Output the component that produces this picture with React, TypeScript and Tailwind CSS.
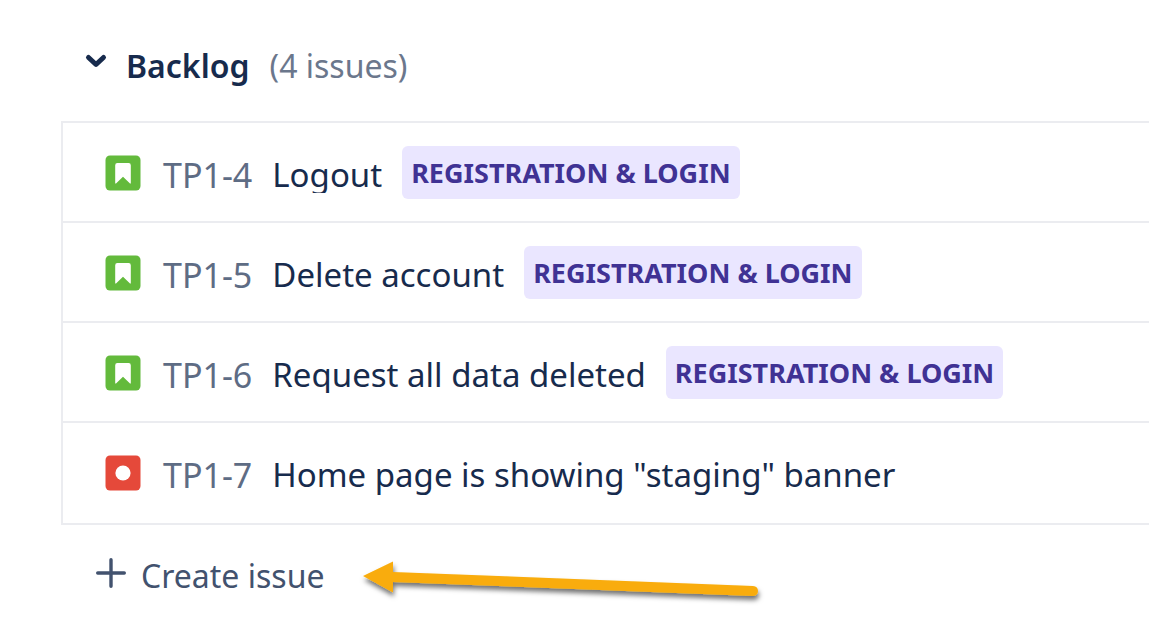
type Issue = { key: string; title: string; epic?: string; type: "story" | "bug" };

const issues: Issue[] = [
  { key: "TP1-4", title: "Logout", epic: "REGISTRATION & LOGIN", type: "story" },
  { key: "TP1-5", title: "Delete account", epic: "REGISTRATION & LOGIN", type: "story" },
  { key: "TP1-6", title: "Request all data deleted", epic: "REGISTRATION & LOGIN", type: "story" },
  { key: "TP1-7", title: 'Home page is showing "staging" banner', type: "bug" },
];

function TypeIcon({ type }: { type: Issue["type"] }) {
  return (
    <svg viewBox="0 0 36 36" className="mt-[2px] size-9 shrink-0" role="img" aria-label={type}>
      <rect x="0.5" y="0.5" width="35" height="35" rx="4.5" fill={type === "story" ? "#63ba3c" : "#e5493a"} />
      {type === "story" ? (
        <path d="M10.2 28.5V10.2Q10.2 8 12.4 8h11.2q2.2 0 2.2 2.2v18.3h-.8L18 21.8l-7 6.7z" fill="#fff" />
      ) : (
        <circle cx="18" cy="18" r="7.6" fill="#fff" />
      )}
    </svg>
  );
}

function Arrow() {
  return (
    <svg
      viewBox="0 0 410 50"
      className="pointer-events-none absolute top-1/2 left-full ml-[34px] h-[50px] w-[410px] -translate-y-1/2 overflow-visible"
      aria-hidden="true"
    >
      <defs>
        <filter id="arrow-shadow" x="-5%" y="-30%" width="110%" height="200%">
          <feDropShadow dx="1" dy="4" stdDeviation="2.5" floodColor="#000" floodOpacity="0.55" />
        </filter>
      </defs>
      <path
        d="M5 25L35 10.5v10.5L395 35q5 0.5 5 5t-5 5L35 31v10.5z"
        fill="#f9ac0a"
        filter="url(#arrow-shadow)"
      />
    </svg>
  );
}

export default function App() {
  return (
    <main className="min-h-screen overflow-hidden bg-white pt-10 pl-[61px] font-['Noto_Sans',sans-serif] text-[#172b4d]">
      <header className="flex h-[52px] items-center pl-[23px]">
        <button aria-label="Collapse backlog" aria-expanded="true" className="mr-[18px] pb-[10px]">
          <svg viewBox="0 0 24 24" className="size-6" fill="none" stroke="#172b4d" strokeWidth="5" strokeLinecap="round" strokeLinejoin="round">
            <path d="M4.5 8.5l7.5 7 7.5-7" />
          </svg>
        </button>
        <h1 className="text-[32px] font-semibold">Backlog</h1>
        <span className="ml-5 text-[32px] text-[#6b778c]">(4 issues)</span>
      </header>
      <ul className="mt-[29px] border-t-2 border-l-2 border-[#ebecf0]">
        {issues.map((s) => (
          <li
            key={s.key}
            className="flex h-[100px] items-center border-b-2 border-[#ebecf0] pl-[42px] whitespace-nowrap last:h-[102px] last:pb-[2px]"
          >
            <TypeIcon type={s.type} />
            <a href="#issue" className="mt-[6px] ml-[22px] text-[34px] leading-9 text-[#5e6c84]">
              {s.key}
            </a>
            <span
              className={
                s.epic
                  ? "mt-[6px] ml-5 overflow-hidden text-[33px] leading-9"
                  : "mt-[6px] ml-5 text-[33px] leading-9"
              }
            >
              {s.title}
            </span>
            {s.epic && (
              <span className="ml-5 rounded-md bg-[#eae6ff] px-[9px] text-[27px] leading-[53px] font-bold text-[#403294]">
                {s.epic}
              </span>
            )}
          </li>
        ))}
      </ul>
      <button className="relative mt-[27px] ml-[35px] flex items-center gap-[15px] text-[32px] whitespace-nowrap text-[#42526e]">
        <svg viewBox="0 0 30 30" className="mb-[6px] size-[30px]" stroke="#42526e" strokeWidth="3.4" strokeLinecap="round">
          <path d="M15 1.7v26.6M1.7 15h26.6" />
        </svg>
        Create issue
        <Arrow />
      </button>
    </main>
  );
}
